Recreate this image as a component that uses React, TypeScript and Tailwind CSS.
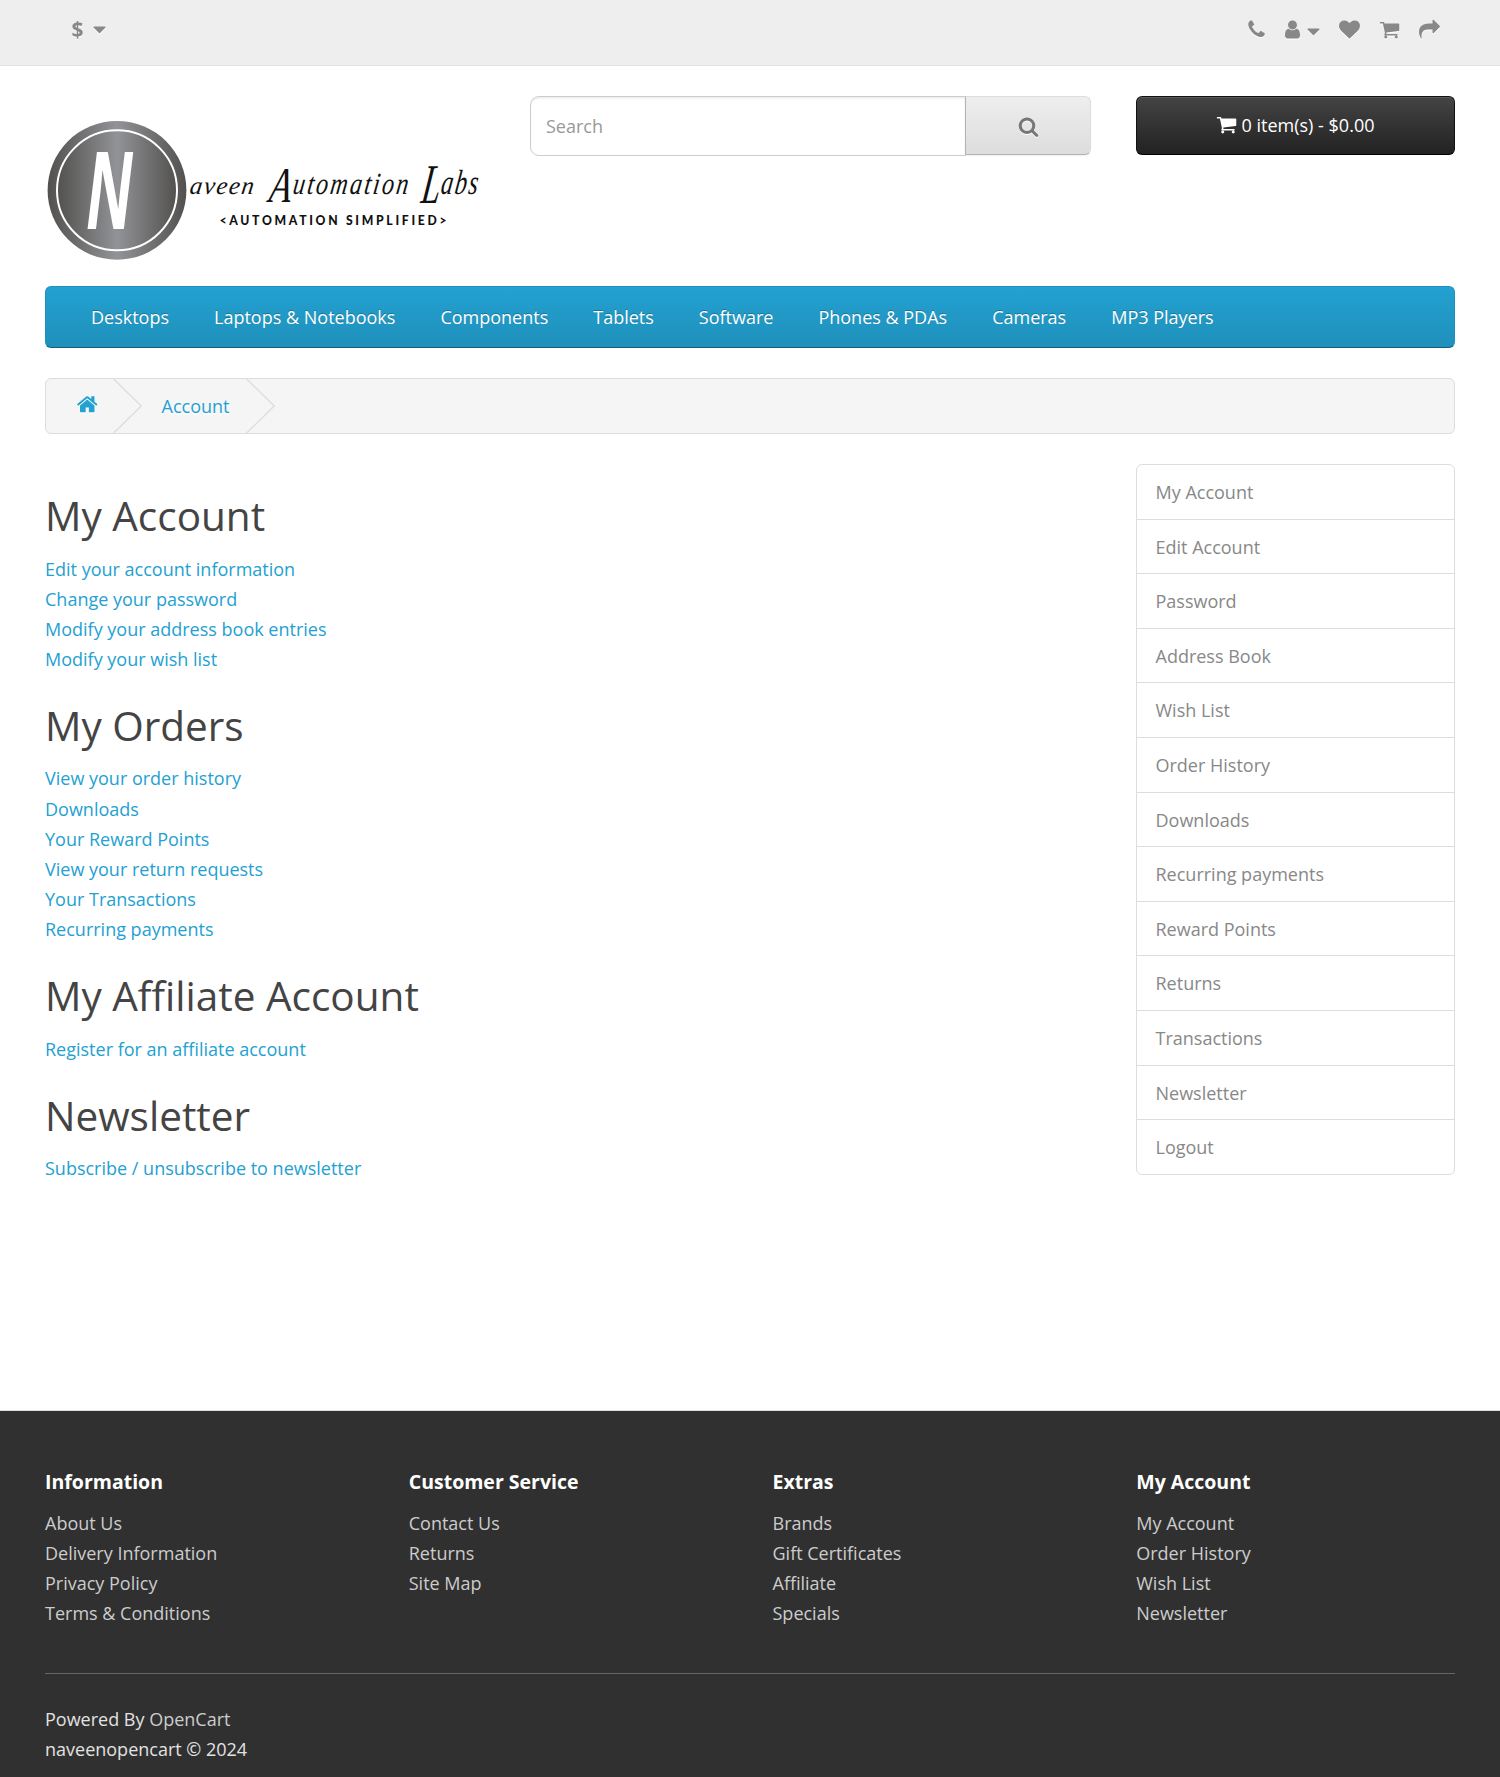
import React from "react";

const ICONS = {
  phone:
    "M1600 1240q0 27-10 70.5t-21 68.5q-21 50-122 106-94 51-186 51-27 0-53-3.5t-57.5-12.5-47-14.5-55.5-20.5-49-18q-98-35-175-83-127-79-264-216t-216-264q-48-77-83-175-3-9-18-49t-20.5-55.5-14.5-47-12.5-57.5-3.5-53q0-92 51-186 56-101 106-122 25-11 68.5-21t70.5-10q14 0 21 3 18 6 53 76 11 19 30 54t35 63.5 31 53.5q3 4 17.5 25t21.5 35.5 7 28.5q0 20-28.5 50t-62 55-62 53-28.5 46q0 9 5 22.5t8.5 20.5 14 24 11.5 19q76 137 174 235t235 174q2 1 19 11.5t24 14 20.5 8.5 22.5 5q18 0 46-28.5t53-62 55-62 50-28.5q14 0 28.5 7t35.5 21.5 25 17.5q25 15 53.5 31t63.5 35 54 30q70 35 76 53 3 7 3 21z",
  user:
    "M1536 1399q0 109-62.5 187t-150.5 78h-854q-88 0-150.5-78t-62.5-187q0-85 8.5-160.5t31.5-152 58.5-131 94-89 134.5-34.5q131 128 313 128t313-128q76 0 134.5 34.5t94 89 58.5 131 31.5 152 8.5 160.5zm-256-887q0 159-112.5 271.5t-271.5 112.5-271.5-112.5-112.5-271.5 112.5-271.5 271.5-112.5 271.5 112.5 112.5 271.5z",
  heart:
    "M896 1664q-26 0-44-18l-624-602q-10-8-27.5-26t-55.5-65.5-68-97.5-53.5-121-23.5-138q0-220 127-344t351-124q62 0 126.5 21.5t120 58 95.5 68.5 76 68q36-36 76-68t95.5-68.5 120-58 126.5-21.5q224 0 351 124t127 344q0 221-229 450l-623 600q-18 18-44 18z",
  cart:
    "M704 1536q0 52-38 90t-90 38-90-38-38-90 38-90 90-38 90 38 38 90zm896 0q0 52-38 90t-90 38-90-38-38-90 38-90 90-38 90 38 38 90zm128-1088v512q0 24-16.5 42.5t-40.5 21.5l-1044 122q13 60 13 70 0 16-24 64h920q26 0 45 19t19 45-19 45-45 19h-1024q-26 0-45-19t-19-45q0-11 8-31.5t16-36 21.5-40 15.5-29.5l-177-823h-204q-26 0-45-19t-19-45 19-45 45-19h256q16 0 28.5 6.5t19.5 15.5 13 24.5 8 26 5.5 29.5 4.5 26h1201q26 0 45 19t19 45z",
  share:
    "M1792 640q0 26-19 45l-512 512q-19 19-45 19t-45-19-19-45v-256h-224q-98 0-175.5 6t-154 21.5-133 42.5-105.5 69.5-80 101-48.5 138.5-17.5 181q0 55 5 123 0 6 2.5 23.5t2.5 26.5q0 15-8.5 25t-23.5 10q-16 0-28-17-7-9-13-22t-13.5-30-10.5-24q-127-285-127-451 0-199 53-333 162-403 875-403h224v-256q0-26 19-45t45-19 45 19l512 512q19 19 19 45z",
  search:
    "M1216 832q0-185-131.5-316.5t-316.5-131.5-316.5 131.5-131.5 316.5 131.5 316.5 316.5 131.5 316.5-131.5 131.5-316.5zm512 832q0 52-38 90t-90 38q-54 0-90-38l-343-342q-179 124-399 124-143 0-273.5-55.5t-225-150-150-225-55.5-273.5 55.5-273.5 150-225 225-150 273.5-55.5 273.5 55.5 225 150 150 225 55.5 273.5q0 220-124 399l343 343q37 37 37 90z",
  home:
    "M1472 992v480q0 26-19 45t-45 19h-384v-384h-256v384h-384q-26 0-45-19t-19-45v-480q0-1 .5-3t.5-3l575-474 575 474q1 2 1 6zm223-69l-62 74q-8 9-21 11h-3q-13 0-21-7l-692-577-692 577q-12 8-24 7-13-2-21-11l-62-74q-8-10-7-23.5t11-21.5l719-599q32-26 76-26t76 26l244 204v-195q0-14 9-23t23-9h192q14 0 23 9t9 23v408l219 182q10 8 11 21.5t-7 23.5z",
  caret:
    "M1408 704q0 26-19 45l-448 448q-19 19-45 19t-45-19l-448-448q-19-19-19-45t19-45 45-19h896q26 0 45 19t19 45z",
};

function Icon({ name, className = "", size = "h-[21px] w-[21px]" }: { name: keyof typeof ICONS; className?: string; size?: string }) {
  return (
    <svg viewBox="0 0 1792 1792" className={`shrink-0 overflow-visible fill-current ${size} ${className}`}>
      <path d={ICONS[name]} />
    </svg>
  );
}

const LIFT = "[filter:drop-shadow(0_1.5px_0_#fff)]";

function TopBar() {
  return (
    <div className="h-[66px] border-b border-[#e2e2e2] bg-[#eee] text-[#888]">
      <div className="flex justify-between pt-[19px] pr-[60px] pl-[71.5px]">
        <div className={`flex h-[21px] items-center ${LIFT}`}>
          <span className="w-[12px] text-[21px] leading-[21px] font-bold">$</span>
          <Icon name="caret" className="ml-[5px]" />
        </div>
        <div className={`flex h-[21px] ${LIFT}`}>
          <Icon name="phone" />
          <Icon name="user" className="ml-[15px]" />
          <Icon name="caret" className="mt-[2px] -ml-[0.5px]" />
          <Icon name="heart" className="ml-[15.5px]" />
          <Icon name="cart" className="ml-[18.5px]" />
          <Icon name="share" className="ml-[19.5px]" />
        </div>
      </div>
    </div>
  );
}

function Logo() {
  return (
    <svg viewBox="45 115 440 150" className="h-[150px] w-[440px]">
      <defs>
        <linearGradient id="disc" x1="0" x2="1" y1="0" y2="0">
          <stop offset="0" stopColor="#52514f" />
          <stop offset="0.5" stopColor="#929397" />
          <stop offset="1" stopColor="#52514f" />
        </linearGradient>
      </defs>
      <circle cx="117" cy="190.3" r="69.4" fill="url(#disc)" />
      <circle cx="117" cy="190.3" r="60" fill="url(#disc)" stroke="#fff" strokeWidth="2" />
      <text
        transform="translate(86 229) scale(0.58 1)"
        fontFamily="'Open Sans', sans-serif"
        fontStyle="italic"
        fontWeight="700"
        fontSize="107"
        fill="#fff"
      >
        N
      </text>
      <g fontFamily="'Liberation Serif', serif" fontStyle="italic" fill="#111">
        <text transform="translate(189 194) skewX(-8)" fontSize="25" textLength="64">aveen</text>
        <text transform="translate(268 202) skewX(-8) scale(0.72 1)" fontSize="50">A</text>
        <text transform="translate(292 194) skewX(-8) scale(0.86 1.1)" fontSize="28" textLength="134">utomation</text>
        <text transform="translate(420 203) skewX(-8) scale(0.6 1)" fontSize="56">L</text>
        <text transform="translate(440 194) skewX(-8) scale(0.86 1.25)" fontSize="28" textLength="43">abs</text>
      </g>
      <text
        x="219.5"
        y="225"
        fontFamily="Lato, sans-serif"
        fontWeight="900"
        fontSize="12.2"
        textLength="227"
        fill="#111"
      >
        &lt;AUTOMATION SIMPLIFIED&gt;
      </text>
    </svg>
  );
}

function Header() {
  return (
    <header className="flex h-[220px] pt-[30px]">
      <div className="w-[485px] pt-[19px]">
        <Logo />
      </div>
      <div className="flex w-[561px]">
        <div className="flex h-[60px] w-[436px] items-center rounded-l-[9px] border border-[#ccc] bg-white pl-[15px] text-[#999] shadow-[inset_0_1.5px_1.5px_rgba(0,0,0,0.075)]">
          Search
        </div>
        <div className="-ml-px flex h-[59px] w-[126px] items-center justify-center rounded-r-[6px] border border-[#ddd] border-b-[#b3b3b3] border-l-[#b3b3b3] bg-linear-to-b from-[#eee] to-[#ddd] pt-px text-[#777] shadow-[0_1px_2px_rgba(0,0,0,0.06)]">
          <Icon name="search" className={LIFT} />
        </div>
      </div>
      <div className="ml-auto flex h-[59px] w-[319px] items-center justify-center rounded-[6px] border border-[#111] border-b-black bg-linear-to-b from-[#444] to-[#222] pb-[2px] text-white shadow-[inset_0_1px_0_rgba(255,255,255,0.12)]">
        <Icon name="cart" className="-ml-px" />
        <span className="ml-[5px]">0 item(s) - $0.00</span>
      </div>
    </header>
  );
}

const MENU = ["Desktops", "Laptops & Notebooks", "Components", "Tablets", "Software", "Phones & PDAs", "Cameras", "MP3 Players"];

function MainMenu() {
  return (
    <nav className="flex h-[62px] items-center gap-[45px] rounded-[6px] border border-[#1f90bb] border-b-[#145e7a] bg-linear-to-b from-[#23a1d1] to-[#1f90bb] pl-[45px] text-white [text-shadow:0_-1px_0_rgba(0,0,0,0.25)]">
      {MENU.map((m) => (
        <a key={m} className="whitespace-nowrap">{m}</a>
      ))}
    </nav>
  );
}

function Chevron() {
  return (
    <svg viewBox="0 0 29 54" className="h-[54px] w-[29px] shrink-0" fill="none" stroke="#ddd" strokeWidth="1.3">
      <path d="M0.7 0 L28.2 27 L0.7 54" />
    </svg>
  );
}

function Breadcrumb() {
  return (
    <div className="mt-[30px] flex h-[56px] items-center rounded-[6px] border border-[#ddd] bg-[#f5f5f5] pl-[29.5px] text-[#23a1d1] [text-shadow:0_1.5px_0_#fff]">
      <Icon name="home" size="h-[22.5px] w-[22.5px]" className={`-mt-[3px] ${LIFT}`} />
      <span className="ml-[15px] flex"><Chevron /></span>
      <span className="ml-[19.5px] w-[69px]">Account</span>
      <span className="ml-[15.5px] flex"><Chevron /></span>
    </div>
  );
}

const SECTIONS = [
  {
    title: "My Account",
    links: ["Edit your account information", "Change your password", "Modify your address book entries", "Modify your wish list"],
  },
  {
    title: "My Orders",
    links: ["View your order history", "Downloads", "Your Reward Points", "View your return requests", "Your Transactions", "Recurring payments"],
  },
  { title: "My Affiliate Account", links: ["Register for an affiliate account"] },
  { title: "Newsletter", links: ["Subscribe / unsubscribe to newsletter"] },
];

const SIDE = [
  "My Account", "Edit Account", "Password", "Address Book", "Wish List", "Order History", "Downloads",
  "Recurring payments", "Reward Points", "Returns", "Transactions", "Newsletter", "Logout",
];

const FOOTER = [
  { title: "Information", links: ["About Us", "Delivery Information", "Privacy Policy", "Terms & Conditions"] },
  { title: "Customer Service", links: ["Contact Us", "Returns", "Site Map"] },
  { title: "Extras", links: ["Brands", "Gift Certificates", "Affiliate", "Specials"] },
  { title: "My Account", links: ["My Account", "Order History", "Wish List", "Newsletter"] },
];

function Footer() {
  return (
    <footer className="h-[367px] border-t border-[#ddd] bg-[#303030] px-[45px] pt-[60px] text-[#e2e2e2]">
      <div className="grid w-[1455px] grid-cols-4">
        {FOOTER.map((c) => (
          <div key={c.title}>
            <h5 className="mb-[15px] text-[19.5px] leading-[21.5px] font-bold text-white">{c.title}</h5>
            <ul className="text-[#ccc]">
              {c.links.map((l) => (
                <li key={l}>{l}</li>
              ))}
            </ul>
          </div>
        ))}
      </div>
      <hr className="mt-[45px] mb-[30px] border-[#666]" />
      <p>
        Powered By <span className="text-[#ccc]">OpenCart</span>
        <br />
        naveenopencart © 2024
      </p>
    </footer>
  );
}

export default function App() {
  return (
    <div className="h-[1777px] w-[1500px] overflow-hidden bg-white font-['Open_Sans',sans-serif] text-[18px] leading-[30px] text-[#666]">
      <TopBar />
      <div className="h-[1344px] px-[45px]">
        <Header />
        <MainMenu />
        <Breadcrumb />
        <div className="mt-[30px] flex items-start justify-between">
          <main>
            {SECTIONS.map((s) => (
              <section key={s.title} className="pt-[30px]">
                <h2 className="mb-[15px] text-[40.5px] leading-[44.55px] text-[#444]">{s.title}</h2>
                <ul className="text-[#23a1d1]">
                  {s.links.map((l) => (
                    <li key={l} className="h-[30.1px]">{l}</li>
                  ))}
                </ul>
              </section>
            ))}
          </main>
          <aside className="w-[319px] rounded-[6px] border border-[#ddd] text-[#888]">
            {SIDE.map((s) => (
              <a
                key={s}
                className="flex h-[54.6px] items-center border-b border-[#ddd] pt-[0.6px] pl-[18.5px] last:h-[53.6px] last:border-b-0"
              >
                {s}
              </a>
            ))}
          </aside>
        </div>
      </div>
      <Footer />
    </div>
  );
}
